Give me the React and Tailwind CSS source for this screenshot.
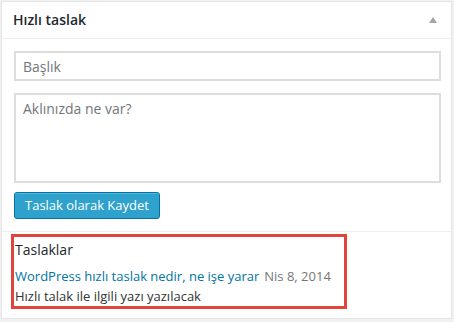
function QuickDraft() {
  return (
    <div className="w-[454px] h-[322px] bg-[#f1f1f1] pt-px pl-px font-['Open_Sans',sans-serif]">
      <div className="w-[451px] h-[318px] bg-white border border-[#e5e5e5] flex flex-col">
        <div className="h-[37px] border-b border-[#eeeeee] flex items-center justify-between pl-[11px] pr-[14px]">
          <h2 className="text-[14px] font-semibold text-[#23282d] leading-none">Hızlı taslak</h2>
          <span className="block w-0 h-0 border-l-[4px] border-r-[4px] border-b-[6px] border-l-transparent border-r-transparent border-b-[#a0a5aa]"></span>
        </div>

        <div className="px-3 pt-[12px] flex flex-col border-b border-[#eeeeee] pb-[12px]">
          <input
            type="text"
            placeholder="Başlık"
            className="h-[30px] w-[427px] border-2 border-[#dddddd] px-[7px] text-[14px] text-[#32373c] placeholder:text-[#72777c] outline-none"
          />
          <textarea
            placeholder="Aklınızda ne var?"
            className="mt-[12px] h-[90px] w-[427px] border-2 border-[#dddddd] px-[7px] py-[3px] text-[14px] text-[#32373c] placeholder:text-[#72777c] resize-none outline-none"
          />
          <button className="mt-[9px] self-start h-[27px] px-[10px] rounded-[3px] bg-[#2ea2cc] border border-[#0074a2] shadow-[inset_0_1px_0_rgba(120,200,230,0.5)] text-white text-[13px] leading-none">
            Taslak olarak Kaydet
          </button>
        </div>

        <div className="ml-[9px] mt-[2px] w-[336px] h-[75px] border-[3px] border-[#e0443d] px-[1px] pt-[3px]">
          <h3 className="text-[14px] text-[#23282d] leading-[20px]">Taslaklar</h3>
          <div className="mt-[6px] text-[13px] leading-[20px]">
            <a href="#" className="text-[#0074a2]">WordPress hızlı taslak nedir, ne işe yarar</a>
            <span className="ml-[5px] text-[#777777]">Nis 8, 2014</span>
          </div>
          <p className="text-[13px] leading-[20px] text-[#333333]">Hızlı talak ile ilgili yazı yazılacak</p>
        </div>
      </div>
    </div>
  );
}

export default function App() {
  return <QuickDraft />;
}
